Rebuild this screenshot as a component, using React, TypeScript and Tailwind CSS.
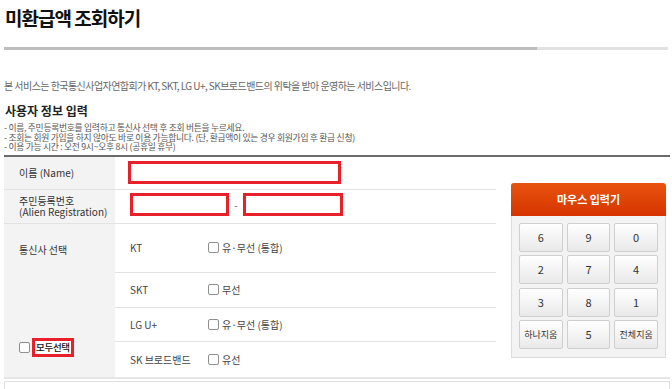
import React from 'react';

const FONT = { fontFamily: '"Noto Sans CJK KR", "Noto Sans", sans-serif' };

const CARRIERS = [
  { name: 'KT', option: '유·무선 (통합)', h: 'h-[49px]' },
  { name: 'SKT', option: '무선', h: 'h-[35px]' },
  { name: 'LG U+', option: '유·무선 (통합)', h: 'h-[34px]' },
  { name: 'SK 브로드밴드', option: '유선', h: 'h-[35px]' },
];

const KEYS = ['6', '9', '0', '2', '7', '4', '3', '8', '1', '하나지움', '5', '전체지움'];

function Box() {
  return <span className="inline-block w-[11px] h-[11px] border border-[#8f8f8f] rounded-[2px] bg-white shrink-0" />;
}

function RedInput({ w }: { w: string }) {
  return <div className={`${w} h-[23px] border-[3px] border-[#e8202a] bg-white`} />;
}

export default function App() {
  return (
    <div style={FONT} className="w-[672px] h-[389px] overflow-hidden bg-white px-[4px] text-[#333]">
      <h1 className="pt-[4px] pl-[1px] text-[19px] leading-[28px] font-semibold text-[#111] tracking-[-1px]">
        미환급액 조회하기
      </h1>

      {/* progress bar */}
      <div className="mt-[15px] flex h-[3px] w-[664px]">
        <div className="w-[533px] bg-[#bdbdbd]" />
        <div className="flex-1 bg-[#e2e2e2]" />
      </div>

      <p className="mt-[29px] text-[10px] leading-[14px] text-[#666] tracking-[-0.55px]">
        본 서비스는 한국통신사업자연합회가 KT, SKT, LG U+, SK브로드밴드의 위탁을 받아 운영하는 서비스입니다.
      </p>

      <h2 className="mt-[10px] pl-[1px] text-[12px] leading-[16px] font-bold text-[#222]">사용자 정보 입력</h2>

      <ul className="mt-[4px] text-[8.8px] leading-[9.5px] text-[#555] tracking-[-0.3px]">
        <li>- 이름, 주민등록번호를 입력하고 통신사 선택 후 조회 버튼을 누르세요.</li>
        <li>- 조회는 회원 가입을 하지 않아도 바로 이용 가능합니다. (단, 환급액이 있는 경우 회원가입 후 환급 신청)</li>
        <li>- 이용 가능 시간 : 오전 9시~오후 8시 (공휴일 휴무)</li>
      </ul>

      {/* form table */}
      <div className="mt-[3px] w-[666px] border-t-2 border-[#6b6b6b] border-b-2 border-b-[#e6e6e6] flex">
        <div className="w-[492px] flex flex-col">
          <div className="flex h-[33px] border-b border-[#e3e3e3]">
            <div className="w-[111px] bg-[#f3f3f3] flex items-center pl-[15px] text-[10px]">이름 (Name)</div>
            <div className="flex-1 flex items-center pl-[13px]">
              <RedInput w="w-[213px]" />
            </div>
          </div>
          <div className="flex h-[34px] border-b border-[#e3e3e3]">
            <div className="w-[111px] bg-[#f3f3f3] flex flex-col justify-center pl-[15px] text-[10px] leading-[11px]">
              <span>주민등록번호</span>
              <span>(Alien Registration)</span>
            </div>
            <div className="flex-1 flex items-center pl-[15px] pb-[4px]">
              <RedInput w="w-[99px]" />
              <span className="w-[14px] text-center text-[10px] text-[#555]">-</span>
              <RedInput w="w-[100px]" />
            </div>
          </div>
          <div className="flex">
            <div className="w-[111px] bg-[#f3f3f3] relative">
              <div className="pl-[15px] pt-[19px] text-[10px] leading-[14px]">통신사 선택</div>
              <div className="absolute left-[15px] top-[114px] flex items-center gap-[2px]">
                <Box />
                <span className="border-[3px] border-[#e8202a] bg-white px-[1px] text-[9.5px] leading-[13px] font-medium text-[#111] tracking-[-0.3px]">
                  모두선택
                </span>
              </div>
            </div>
            <div className="flex-1 flex flex-col">
              {CARRIERS.map((c, i) => (
                <div
                  key={c.name}
                  className={`${c.h} flex items-center text-[10px] text-[#444] ${i < CARRIERS.length - 1 ? 'border-b border-[#e3e3e3]' : ''}`}
                >
                  <span className="w-[93px] pl-[15px]">{c.name}</span>
                  <span className="flex items-center gap-[3px]">
                    <Box />
                    {c.option}
                  </span>
                </div>
              ))}
            </div>
          </div>
        </div>

        {/* mouse keypad */}
        <div className="flex-1 pl-[15px] pt-[26px]">
          <div className="w-[155px]">
            <div className="h-[33px] rounded-t-[3px] bg-gradient-to-b from-[#e8530f] to-[#d63300] flex items-center justify-center text-white text-[11px] font-bold">
              마우스 입력기
            </div>
            <div className="border border-t-0 border-[#dcdcdc] bg-[#f3f3f3] px-[7px] pt-[7px] pb-[8px] grid grid-cols-3 gap-x-[4px] gap-y-[3.5px]">
              {KEYS.map((k) => (
                <div
                  key={k}
                  className={`h-[29px] rounded-[2px] border border-[#cfcfcf] bg-gradient-to-b from-white to-[#e9e9e9] flex items-center justify-center text-[#333] ${k.length > 1 ? 'text-[9px]' : 'text-[11px]'}`}
                >
                  {k}
                </div>
              ))}
            </div>
          </div>
        </div>
      </div>

      <div className="mt-[2px] w-[666px] h-[20px] border border-[#e0e0e0]" />
    </div>
  );
}
